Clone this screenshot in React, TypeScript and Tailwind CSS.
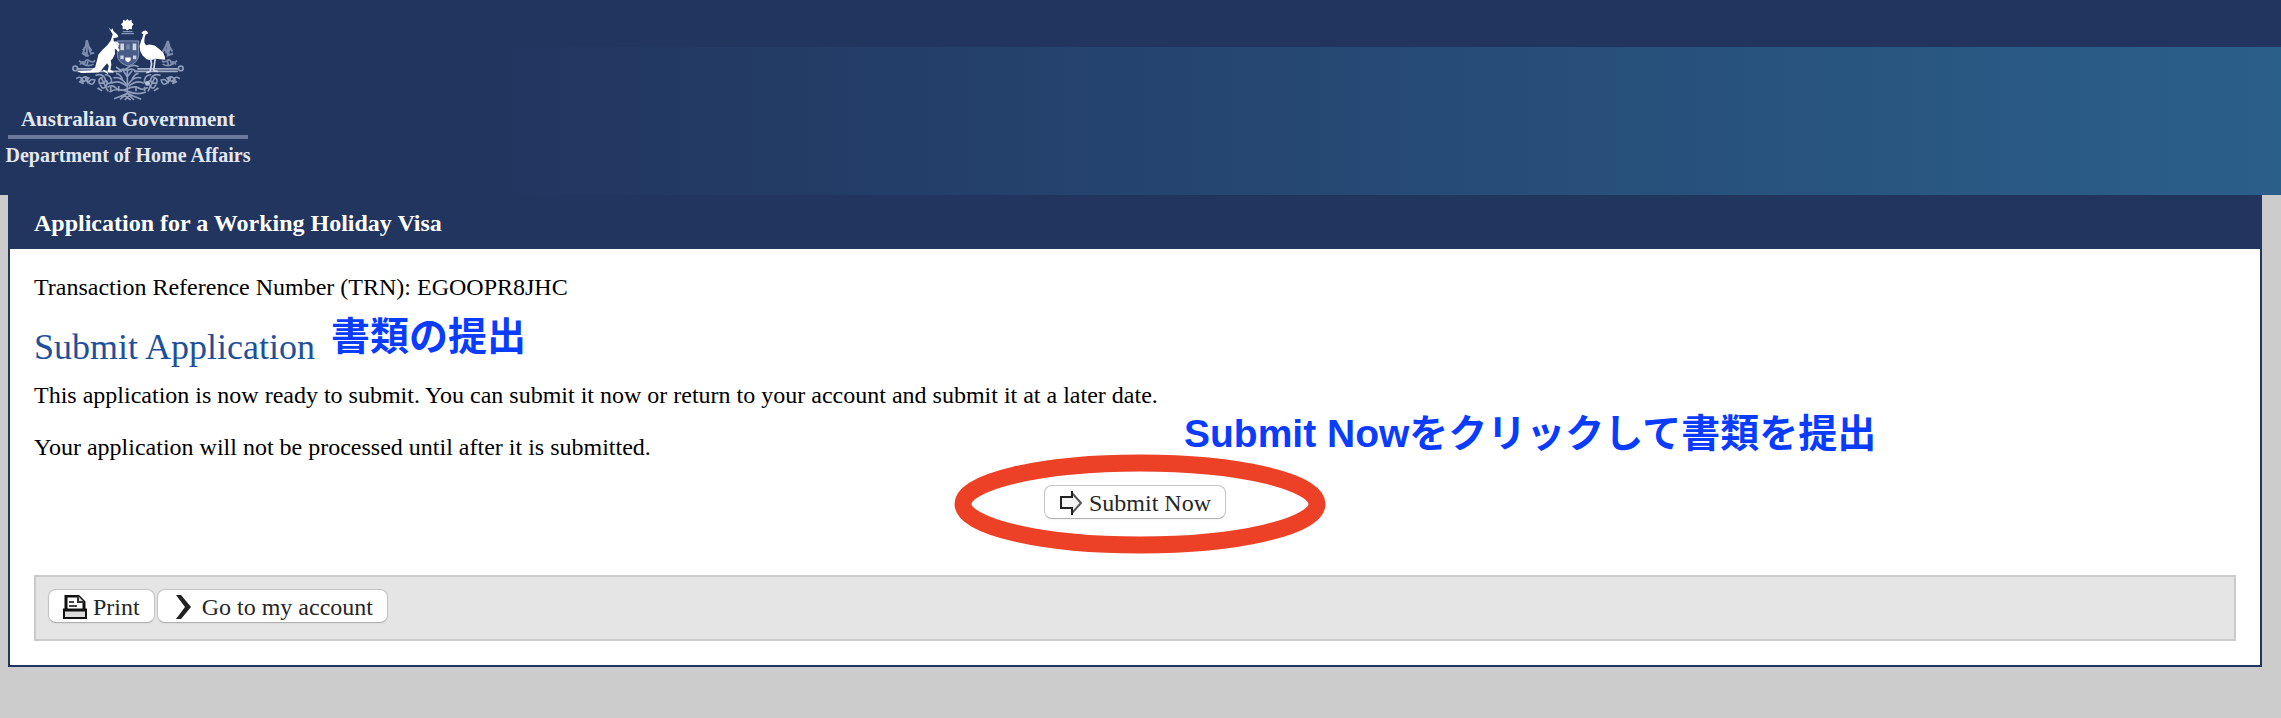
import React from "react"

const Emblem = () => (
    <svg viewBox="36 25 336 250" className="h-[83px] w-[112px]" fill="none" role="img" aria-label="Coat of arms">
        {/* star */}
        <path
            d="M202 28l5 5 8-3 0 8 6 6-5 6 0 9-8-1-6 5-6-5-8 1 0-9-5-6 6-6 0-8 8 3z"
            fill="#fff"
        />
        <path d="M184 72h38M188 66h30" stroke="#8795b5" strokeWidth="4" />
        {/* shield */}
        <path d="M172 94h64v42q0 24-32 34q-32-10-32-34z" fill="#4a5d88" stroke="#8593b4" strokeWidth="3" />
        <g fill="#cdd5e3">
            <rect x="181" y="102" width="11" height="20" />
            <rect x="218" y="102" width="11" height="20" />
            <rect x="199" y="104" width="10" height="16" fill="#7686a9" />
            <rect x="181" y="138" width="10" height="11" />
            <path d="M196 144h16v9l-8 6-8-6z" fill="#fff" />
            <rect x="219" y="138" width="10" height="11" />
        </g>
        {/* wattle */}
        <g stroke="#7d8cae" strokeWidth="6">
            <path d="M80 92l-4 20-8 10M80 92l6 20 8 12M74 114l-6 18 12 8M86 114l6 18 10-2M80 98v44M68 126l18 14" />
            <path d="M324 94l-8 20 4 18M324 94l6 20 8 12M316 114l-8 14M330 114l-6 24 16-6M324 98v42" />
            <path d="M60 166q4-14 14-6q2-14 14-6t16-2M66 162q18 12 34 2M56 154l16 10M84 150l-4 20" strokeWidth="5" />
            <path d="M348 166q-4-14-14-6q-2-14-14-6t-12-2M342 162q-18 12-34 2M352 154l-16 10M322 150l4 20" strokeWidth="5" />
        </g>
        <g stroke="#8f9dbb" strokeWidth="5">
            <circle cx="45" cy="177" r="7" />
            <circle cx="363" cy="177" r="7" />
            <path d="M50 178h60M52 186h134M232 178h122M222 186h132" stroke="#a3afc8" />
            <path d="M168 172q18 18 34 4t34-4M176 188q12-16 26-4q14-12 28 4M202 176v74M190 184l12 18 14-18" />
            <path d="M48 208q12-10 18 2t18-4q-14-10-22 6l8 12M88 204q-12 10 0 18t16-10q-14-6-18 8M56 216l14 6M74 202l10 20" />
            <path d="M360 208q-12-10-18 2t-18-4q14-10 22 6l-8 12M320 204q12 10 0 18t-16-10q14-6 18 8M352 216l-14 6M334 202l-10 20" />
            <path d="M106 198q20-8 28 8t-16 16q-6-16 10-18M120 226q8 18 18 4t-4-18M134 196q16 0 20 14t-16 12M112 236l14 8M124 206l20 40" />
            <path d="M302 198q-20-8-28 8t16 16q6-16-10-18M288 226q-8 18-18 4t4-18M274 196q-16 0-20 14t16 12M296 236l-14 8M284 206l-20 40" />
            <path d="M142 234q14-10 26 2t34 2t34-2t28-2M148 248q22-14 54-2t56 2M154 222q20-12 46 8M252 222q-20-12-46 8" />
            <path d="M160 206q20-8 42 22q20-30 42-22M168 192q14 2 20 20M236 192q-14 2-20 20M152 232v14M176 230v16M228 230v16M254 232v14" />
            <path d="M162 268q20-6 40-16q20 10 42 18M180 270l22-18 20 20M190 256l22 16M214 254l-20 18" />
        </g>
        <circle cx="262" cy="222" r="7" fill="#b8c2d6" />
        {/* kangaroo */}
        <path
            d="M145 53l8 8 4-5 4 10 7 5 7 8-3 5-12 1 1 9 8 6 7 10-2 4 5 8-4 5-7-8-4 0 1 14-7 14-6 6 2 12-3 16 9 5 0 4-14-1-3-4 3-16-5-8-11 13-7 9-8 6-28 1-24 1-11-6 40-2 13-10 6-22 4-16 13-15 13-12 11-15 6-19z"
            fill="#fff"
        />
        <path d="M166 96l10 8-6 8M130 182l14 10" stroke="#fff" strokeWidth="4" />
        {/* emu */}
        <path
            d="M244 70l6-6 8-1 6 5-1 5-6 2-3 10-1 13 5 9 11-2 15 3 14 10 12 12 5 12 1 9-14-2-16-1-12 4-14-3-12-11-7-13-2-16 4-15 5-12 2-8z"
            fill="#fff"
        />
        <path d="M271 146l4 16-4 24M286 146l-2 16-3 22M271 186l-12 4M282 184l12 2" stroke="#d5dce8" strokeWidth="5" />
    </svg>
)

const ArrowIcon = () => (
    <svg viewBox="0 0 24 24" className="h-6 w-6" fill="none" aria-hidden="true">
        <path d="M2 7h11V2l9 10-9 10v-5H2z" fill="#f4f4f4" />
        <path d="M13 2l9 10-9 10" stroke="#555" strokeWidth="2" />
        <path d="M14 6H2v11h12M13 0v7M13 16v8" stroke="#222" strokeWidth="2" />
    </svg>
)

const PrintIcon = () => (
    <svg viewBox="0 0 24 24" className="h-6 w-6" fill="none" aria-hidden="true">
        <path d="M3 14V1h12l6 6v7" fill="#fff" stroke="#111" strokeWidth="3" />
        <path d="M15 1v6h6" fill="#ddd" stroke="#333" strokeWidth="2" />
        <path d="M6 7h5M6 11h8" stroke="#444" strokeWidth="2" />
        <path d="M1 15h22v8H1z" fill="#ddd" stroke="#111" strokeWidth="2" />
        <path d="M0 15h24" stroke="#111" strokeWidth="3" />
    </svg>
)

const ChevronIcon = () => (
    <svg viewBox="0 0 24 24" className="h-6 w-6" aria-hidden="true">
        <path d="M4 0h5l10 12L9 24H4l9-12z" fill="#222" />
    </svg>
)

const ActionButton = ({ icon, children }: { icon: React.ReactNode; children: React.ReactNode }) => (
    <button
        type="button"
        className="flex h-[34px] items-center gap-1.5 rounded-lg border border-[#c4c4c4] border-b-[#b0b0b0] bg-white px-3.5 pt-0.5 text-2xl text-[#262626] shadow-xs"
    >
        {icon}
        <span>{children}</span>
    </button>
)

const App = () => {
    return (
        <div className="min-h-screen bg-[#cccccc] font-['Liberation_Serif','Noto_Sans_CJK_JP',serif] text-2xl text-black">
            <header className="bg-[#21355f]">
                <div className="flex h-[195px] bg-[linear-gradient(to_right,#21355f_22%,#2a5f8a)] bg-[position:0_47px] bg-no-repeat">
                    <div className="ml-2 flex w-60 flex-col items-center pt-[18px] text-[20px] leading-6 font-bold whitespace-nowrap text-[#e3e7ef]">
                        <Emblem />
                        <p className="mt-1.5 text-[21px]">Australian Government</p>
                        <div className="mt-1 h-1 w-full bg-[#6b7a9c]" />
                        <p className="mt-1">Department of Home Affairs</p>
                    </div>
                </div>
            </header>

            <main className="mr-[19px] ml-2 border-2 border-t-0 border-[#21355f] bg-white">
                <h1 className="bg-[#21355f] px-6 pt-3.5 pb-3 leading-7 font-bold text-white">
                    Application for a Working Holiday Visa
                </h1>
                <div className="px-6 pt-6 pb-6 leading-7">
                    <p>Transaction Reference Number (TRN): EGOOPR8JHC</p>
                    <div className="mt-4 flex items-start gap-4">
                        <h2 className="pt-2.5 text-4xl leading-10 text-[#1f509a]">Submit Application</h2>
                        <span className="font-['Liberation_Sans','Noto_Sans_CJK_JP',sans-serif] text-[39px] leading-10 font-bold text-[#0a3cff]">
                            書類の提出
                        </span>
                    </div>
                    <p className="mt-3.5">
                        This application is now ready to submit. You can submit it now or return to your account and submit
                        it at a later date.
                    </p>
                    <p className="mt-6">Your application will not be processed until after it is submitted.</p>

                    <div className="mt-6 flex justify-center">
                        <div className="relative">
                            <ActionButton icon={<ArrowIcon />}>Submit Now</ActionButton>
                            <svg
                                viewBox="0 0 372 100"
                                className="pointer-events-none absolute -top-[31px] -left-[90px] h-[100px] w-[372px] max-w-none"
                                fill="none"
                                aria-hidden="true"
                            >
                                <ellipse cx="186" cy="50" rx="177" ry="41" stroke="#ec4127" strokeWidth="17" />
                            </svg>
                            <p className="absolute -top-[71px] left-[140px] font-['Liberation_Sans','Noto_Sans_CJK_JP',sans-serif] text-[39px] leading-10 font-bold whitespace-nowrap text-[#0a3cff]">
                                Submit Nowをクリックして書類を提出
                            </p>
                        </div>
                    </div>

                    <div className="mt-14 flex h-[66px] items-start gap-0.5 border-2 border-[#cbcbcb] bg-[#e5e5e5] px-3 pt-3">
                        <ActionButton icon={<PrintIcon />}>Print</ActionButton>
                        <ActionButton icon={<ChevronIcon />}>Go to my account</ActionButton>
                    </div>
                </div>
            </main>
        </div>
    )
}

export default App
